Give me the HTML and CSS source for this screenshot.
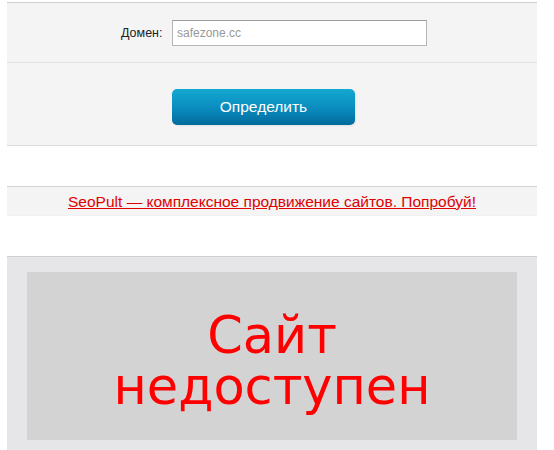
FILE: index.html
```html
<!DOCTYPE html>
<html lang="ru">
<head>
<meta charset="utf-8">
<title>Сайт недоступен</title>
<link rel="stylesheet" href="styles.css">
</head>
<body>
<div class="page">
  <form class="form">
    <div class="row row-domain">
      <label class="label" for="domain">Домен:</label>
      <input class="input" id="domain" type="text" placeholder="safezone.cc">
    </div>
    <div class="row row-submit">
      <button class="btn" type="button">Определить</button>
    </div>
  </form>
  <div class="ad">
    <a class="ad-link" href="#">SeoPult — комплексное продвижение сайтов. Попробуй!</a>
  </div>
  <div class="result">
    <div class="shot">
      <div class="shot-line">Сайт</div>
      <div class="shot-line">недоступен</div>
    </div>
  </div>
</div>
</body>
</html>
```
FILE: styles.css
```css
html, body {
  margin: 0;
  padding: 0;
  background: #ffffff;
}
body {
  font-family: "Liberation Sans", Arial, sans-serif;
  overflow: hidden;
}
.page {
  width: 530px;
  margin: 2px 0 0 7px;
}
.form {
  margin: 0;
  background: #f4f4f5;
  border-top: 1px solid #cfcfd1;
  border-bottom: 1px solid #dcdcde;
}
.row {
  display: flex;
  align-items: center;
}
.row-domain {
  height: 60px;
  border-bottom: 1px solid #e2e2e4;
  padding-left: 114px;
  box-sizing: border-box;
}
.label {
  font-size: 12.5px;
  color: #222;
  width: 51px;
}
.input {
  width: 255px;
  height: 26px;
  box-sizing: border-box;
  border: 1px solid #b5b5b5;
  border-top-color: #9d9d9d;
  background: #fff;
  padding: 0 0 0 4px;
  margin: 1px 0 0 0;
  font-family: "Liberation Sans", Arial, sans-serif;
  font-size: 12px;
  color: #333;
  outline: none;
}
.input::placeholder {
  color: #999999;
}
.row-submit {
  height: 82px;
  padding-left: 165px;
  padding-top: 5px;
  box-sizing: border-box;
}
.btn {
  width: 183px;
  height: 36px;
  border: 0;
  border-radius: 5px;
  background: linear-gradient(to bottom, #13a8d2 0%, #0a8bbd 55%, #046a9c 100%);
  color: #fff;
  font-family: "Liberation Sans", Arial, sans-serif;
  font-size: 15.5px;
  padding: 0;
  box-shadow: 1px 1px 2px rgba(0,0,0,0.08);
  cursor: pointer;
}
.ad {
  margin-top: 40px;
  height: 30px;
  background: #f4f4f5;
  border-top: 1px solid #d2d2d4;
  border-bottom: 1px solid #f0f1f2;
  display: flex;
  align-items: center;
  justify-content: center;
  box-sizing: border-box;
}
.ad-link {
  color: #e00000;
  font-size: 15.5px;
  text-decoration: underline;
  margin-top: 1px;
}
.result {
  margin-top: 40px;
  background: #e6e6e8;
  border-top: 1px solid #cfcfd1;
  padding: 15px 20px 20px 20px;
}
.shot {
  background: #d3d3d3;
  height: 168px;
  box-sizing: border-box;
  padding-top: 38px;
  text-align: center;
}
.shot-line {
  font-family: "DejaVu Sans", Verdana, sans-serif;
  font-size: 51px;
  line-height: 51px;
  color: #ff0000;
}
```
